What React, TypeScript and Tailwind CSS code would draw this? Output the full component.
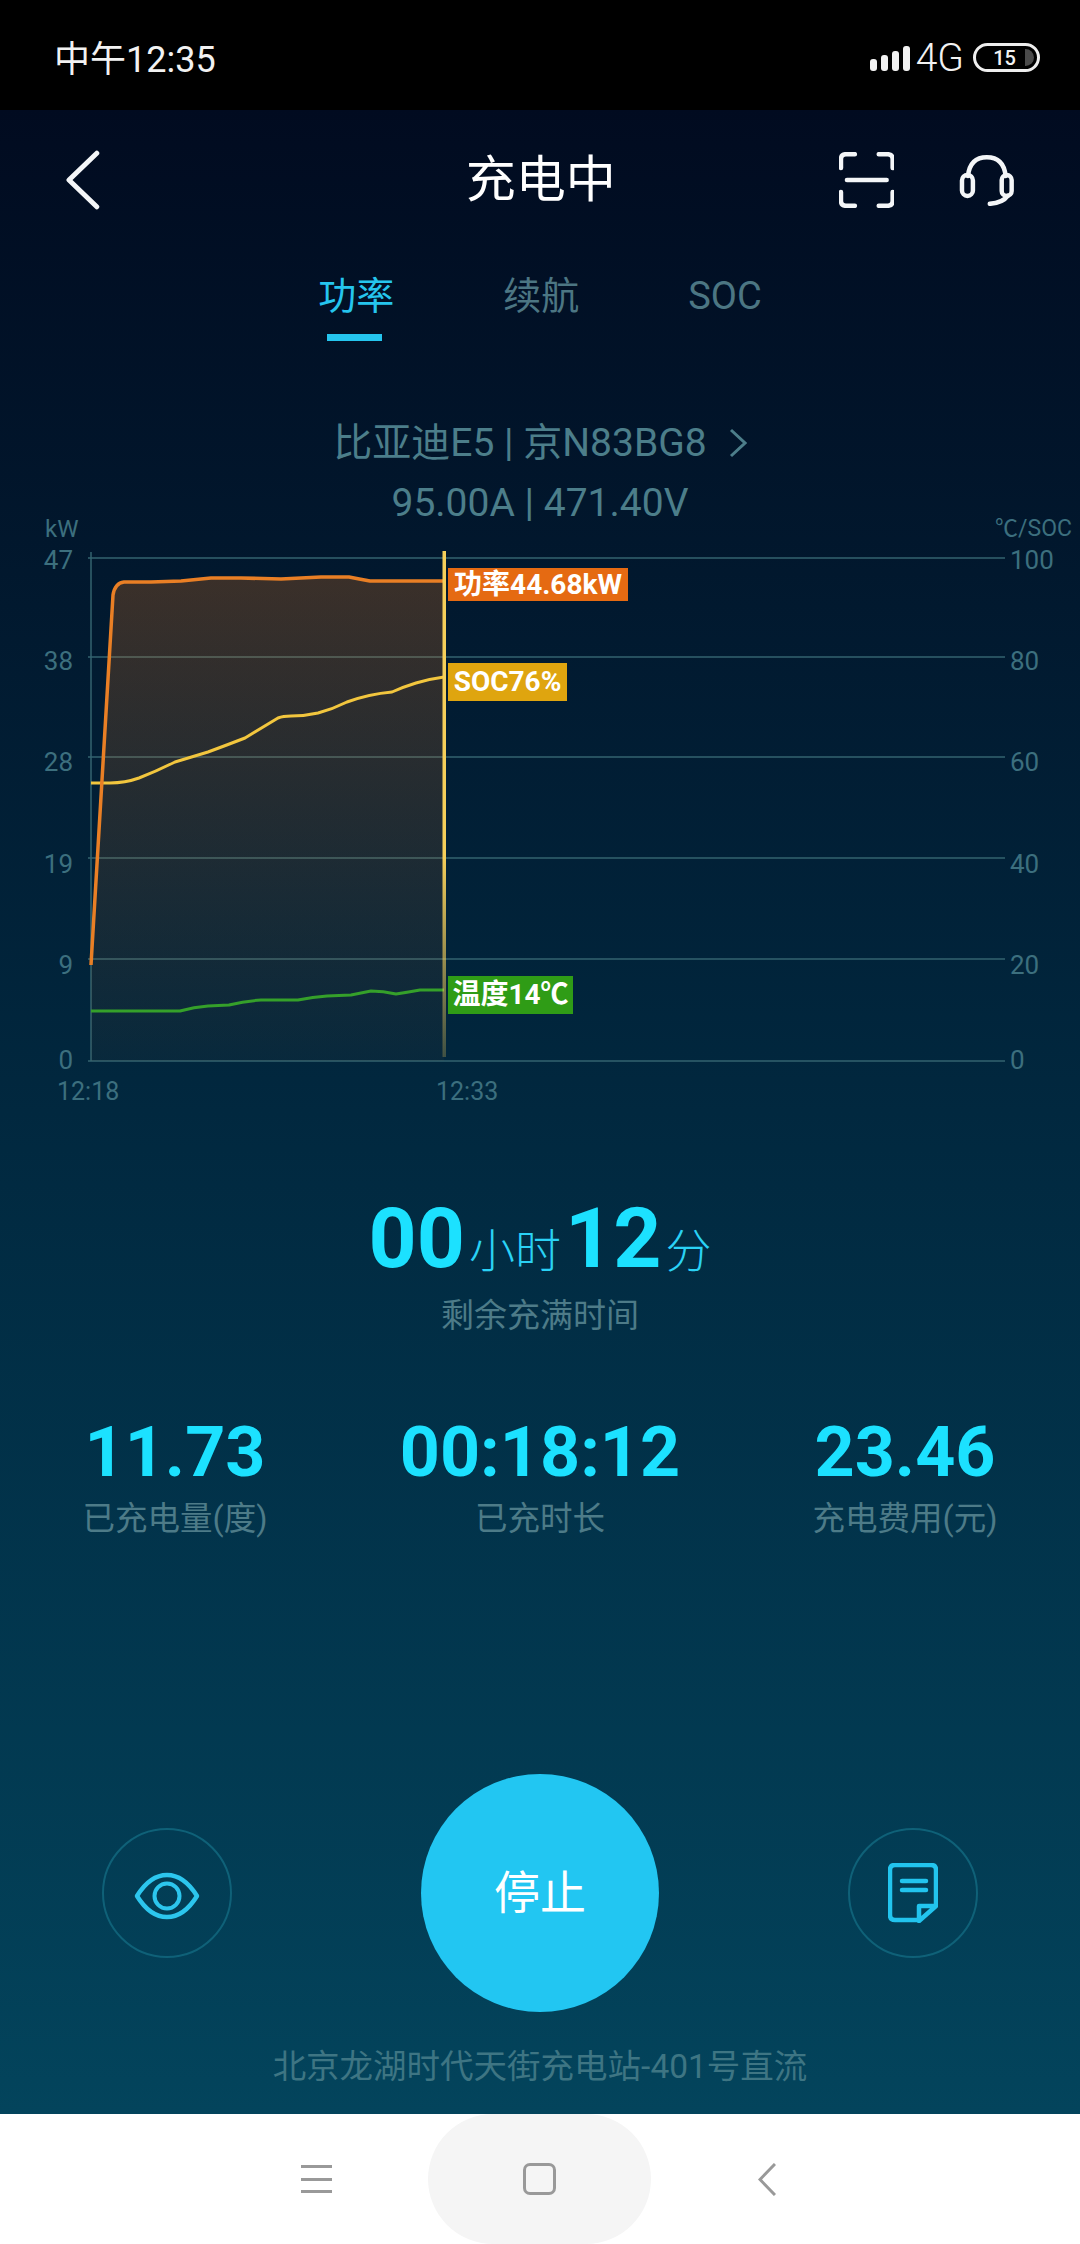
// 充电中 screen
const leftTicks = ["47", "38", "28", "19", "9", "0"];
const rightTicks = ["100", "80", "60", "40", "20", "0"];
const gridY = [7, 106, 206, 307, 408, 510];

// chart paths, origin is the plot's top left corner
const powerLine =
  "M0 414 L22 44 Q24 32 33 31 L60 31 L90 30 L120 27 L150 27 L190 28 L230 26 L258 26 Q268 28 279 30 L353 30";
const socLine =
  "M0 232 L19 232 Q34 232 48 227 Q66 220 84 211 L117 201 Q136 194 154 187 L187 167 Q192 165 200 165 Q214 165 227 162 Q242 158 256 151 Q278 143 301 141 Q312 136 325 132 Q338 128 353 126";
const tempLine =
  "M0 460 L89 460 Q103 456 117 455 L138 454 Q154 450 170 449 L207 449 Q222 446 236 445 L260 444 L280 440 Q292 440 305 443 Q318 441 329 439 L353 439";

function StatusBar() {
  return (
    <div className="h-[110px] shrink-0 bg-black flex items-start justify-between pl-[54px] pr-[40px] text-[#f2f2f2]">
      <span className="mt-[37px] text-[36px] leading-[46px]">中午12:35</span>
      <div className="mt-[43px] flex items-start">
        <div className="flex items-end gap-[4px] h-[26px] mt-[2px]">
          <span className="w-[7px] h-[12px] rounded-[3px] bg-[#f2f2f2]" />
          <span className="w-[7px] h-[16px] rounded-[3px] bg-[#f2f2f2]" />
          <span className="w-[7px] h-[20px] rounded-[3px] bg-[#f2f2f2]" />
          <span className="w-[7px] h-[25px] rounded-[3px] bg-[#f2f2f2]" />
        </div>
        <span className="ml-[6px] text-[39px] leading-[30px] font-light">4G</span>
        <div className="ml-[9px] w-[67px] h-[29px] rounded-full border-[3px] border-[#eeeeee] flex items-center justify-center relative">
          <span className="text-[20px] leading-[22px] font-medium mr-[4px]">15</span>
          <span className="absolute right-[3px] top-[3px] w-[9px] h-[17px] rounded-r-full bg-[#4a4a4a]" />
        </div>
      </div>
    </div>
  );
}

function Header() {
  return (
    <div className="h-[140px] flex items-center pl-[64px] pr-[65px] text-white">
      <svg width="38" height="60" viewBox="0 0 38 60" fill="none" stroke="#f4f6f8" strokeWidth="5" strokeLinecap="round" strokeLinejoin="round">
        <path d="M33 3 L5 30 L33 57" />
      </svg>
      <span className="ml-[364px] w-[150px] text-[50px] leading-[60px] text-center whitespace-nowrap">充电中</span>
      <svg className="ml-[223px]" width="56" height="56" viewBox="0 0 56 56" fill="none" stroke="#f4f6f8" strokeWidth="4.5" strokeLinecap="round">
        <path d="M16 2 H7 Q2 2 2 7 V16" />
        <path d="M40 2 H49 Q54 2 54 7 V16" />
        <path d="M2 40 V49 Q2 54 7 54 H16" />
        <path d="M54 40 V49 Q54 54 49 54 H40" />
        <path d="M8 28 H48" />
      </svg>
      <svg className="ml-[65px]" width="56" height="52" viewBox="0 0 56 52" fill="none" stroke="#f4f6f8" strokeWidth="4.5" strokeLinecap="round" strokeLinejoin="round">
        <path d="M9 22 Q11 3 28 3 Q45 3 47 22" />
        <rect x="3" y="21" width="11" height="21" rx="5.5" />
        <rect x="43" y="21" width="10" height="21" rx="5" />
        <path d="M49 42 Q44 49 31 50" />
      </svg>
    </div>
  );
}

function Tabs() {
  return (
    <div className="flex justify-center gap-[109px] text-[38px] leading-[44px]">
      <div className="flex flex-col items-center">
        <span className="text-[#25c5ee]">功率</span>
        <span className="mt-[16px] mr-[3px] w-[55px] h-[7px] bg-[#25c5ee]" />
      </div>
      <span className="text-[#4c7683]">续航</span>
      <span className="text-[#4c7683]">SOC</span>
    </div>
  );
}

function Chart() {
  return (
    <div>
      <div className="flex justify-between pl-[45px] pr-[8px] text-[#3c6f7e]">
        <span className="text-[24px] leading-[24px]">kW</span>
        <span className="text-[23px] leading-[24px]">℃/SOC</span>
      </div>
      <div className="mt-[10px] flex h-[515px] items-start">
        <div className="w-[91px] h-[536px] -mt-[6px] flex flex-col justify-between items-end pr-[18px] text-[26px] leading-[30px] text-[#3c6f7e]">
          {leftTicks.map((t) => (
            <span key={t} className="last:-translate-y-[6px]">{t}</span>
          ))}
        </div>
        <div className="relative w-[914px] h-[515px]">
          <svg className="w-full h-full overflow-visible" viewBox="0 0 914 515" fill="none">
            <defs>
              <linearGradient id="fill" x1="0" y1="0" x2="0" y2="1">
                <stop offset="0" stopColor="#f07a1a" stopOpacity="0.24" />
                <stop offset="1" stopColor="#f07a1a" stopOpacity="0.03" />
              </linearGradient>
              <linearGradient id="cursor" x1="0" y1="0" x2="0" y2="1">
                <stop offset="0" stopColor="#f5cf5a" />
                <stop offset="0.6" stopColor="#f5cf5a" />
                <stop offset="1" stopColor="#f5cf5a" stopOpacity="0.25" />
              </linearGradient>
            </defs>
            {gridY.map((y) => (
              <line key={y} x1="-3" x2="914" y1={y} y2={y} stroke="#33636f" strokeWidth="1.5" />
            ))}
            <line x1="0" x2="0" y1="1" y2="510" stroke="#33636f" strokeWidth="1.5" />
            <path d={`${powerLine} L353 510 L0 510 Z`} fill="url(#fill)" />
            <path d={tempLine} stroke="#35a02a" strokeWidth="3" strokeLinejoin="round" />
            <path d={socLine} stroke="#f2c63e" strokeWidth="3" strokeLinejoin="round" />
            <path d={powerLine} stroke="#e97f25" strokeWidth="3.5" strokeLinejoin="round" />
            <rect x="351.5" y="0" width="3.5" height="506" fill="url(#cursor)" />
          </svg>
          <span className="absolute left-[357px] top-[17px] h-[33px] w-[180px] bg-[#e56a12] text-white text-[28px] leading-[33px] font-bold text-center whitespace-nowrap">
            功率44.68kW
          </span>
          <span className="absolute left-[357px] top-[112px] h-[38px] w-[119px] bg-[#dfa50f] text-white text-[28px] leading-[38px] font-bold text-center whitespace-nowrap">
            SOC76%
          </span>
          <span className="absolute left-[357px] top-[425px] h-[38px] w-[125px] bg-[#2f9c16] text-white text-[28px] leading-[38px] font-bold text-center whitespace-nowrap">
            温度14℃
          </span>
        </div>
        <div className="pl-[5px] h-[536px] -mt-[6px] flex flex-col justify-between text-[26px] leading-[30px] text-[#3c6f7e]">
          {rightTicks.map((t) => (
            <span key={t} className="last:-translate-y-[6px]">{t}</span>
          ))}
        </div>
      </div>
      <div className="mt-[11px] flex pl-[57px] text-[25px] leading-[30px] text-[#3c6f7e]">
        <span className="w-[379px]">12:18</span>
        <span>12:33</span>
      </div>
    </div>
  );
}

function Stat({ value, label }: { value: string; label: string }) {
  return (
    <div className="w-[350px] flex flex-col items-center">
      <span className="text-[70px] leading-[80px] font-bold text-[#1ce1ff]">{value}</span>
      <span className="mt-[7px] text-[32.5px] leading-[40px] text-[#4d7b88]">{label}</span>
    </div>
  );
}

function Actions() {
  return (
    <div className="mt-[235px] h-[238px] flex items-center pl-[102px] gap-[189px]">
      <div className="w-[130px] h-[130px] rounded-full border-2 border-[#0f6178] flex items-center justify-center">
        <svg className="mt-[5px]" width="66" height="48" viewBox="0 0 66 48" fill="none" stroke="#2cc6ee" strokeWidth="4.5" strokeLinejoin="round">
          <path d="M3 24 Q16 3 33 3 Q50 3 63 24 Q50 45 33 45 Q16 45 3 24 Z" />
          <circle cx="33" cy="24" r="12.5" strokeWidth="4" />
        </svg>
      </div>
      <div className="w-[238px] h-[238px] rounded-full bg-[#22c6f2] flex items-center justify-center text-white text-[46px] leading-[56px]">
        停止
      </div>
      <div className="w-[130px] h-[130px] rounded-full border-2 border-[#0f6178] flex items-center justify-center">
        <svg width="50" height="60" viewBox="0 0 50 60" fill="none" stroke="#22c4ee" strokeWidth="4.5" strokeLinejoin="round" strokeLinecap="round">
          <path d="M30 57 H7 Q2 57 2 52 V7 Q2 2 7 2 H43 Q48 2 48 7 V42" />
          <path d="M14 18 H38" />
          <path d="M14 27 H38" />
          <path d="M31 43 H48 L31 58 Z" />
        </svg>
      </div>
    </div>
  );
}

function NavBar() {
  return (
    <div className="h-[130px] shrink-0 bg-white flex items-center pl-[301px]">
      <div className="w-[31px] h-[28px] flex flex-col justify-between">
        <span className="h-[3px] bg-[#999999]" />
        <span className="h-[3px] bg-[#999999]" />
        <span className="h-[3px] bg-[#999999]" />
      </div>
      <div className="ml-[96px] w-[223px] h-[130px] rounded-full bg-[#f5f5f5] flex items-center justify-center">
        <span className="w-[33px] h-[32px] rounded-[7px] border-[3px] border-[#999999]" />
      </div>
      <svg className="ml-[107px]" width="18" height="33" viewBox="0 0 18 33" fill="none" stroke="#999999" strokeWidth="3">
        <path d="M17 1 L2 16.5 L17 32" />
      </svg>
    </div>
  );
}

export default function App() {
  return (
    <div className="w-[1080px] h-[2244px] overflow-hidden flex flex-col font-['Roboto','Noto_Sans_CJK_SC',sans-serif]">
      <StatusBar />
      <div className="flex-1 bg-gradient-to-b from-[#010b20] via-[#01283f] to-[#03445c]">
        <Header />
        <div className="mt-[24px]">
          <Tabs />
        </div>
        <div className="mt-[77px] flex items-center justify-center text-[39px] leading-[50px] text-[#4c7e8a]">
          <span>比亚迪E5 | 京N83BG8</span>
          <svg className="ml-[22px]" width="18" height="30" viewBox="0 0 18 30" fill="none" stroke="#4c7e8a" strokeWidth="3">
            <path d="M2 2 L16 15 L2 28" />
          </svg>
        </div>
        <div className="mt-[21px] text-center text-[39px] leading-[28px] text-[#4c7e8a]">95.00A | 471.40V</div>
        <Chart />
        <div className="mt-[87px] flex items-baseline justify-center leading-[90px]">
          <span className="text-[84px] font-bold text-[#1ce1ff]">00</span>
          <span className="text-[46px] mx-[4px] font-light text-[#2ad2f5]">小时</span>
          <span className="text-[84px] font-bold text-[#1ce1ff]">12</span>
          <span className="text-[46px] ml-[4px] font-light text-[#2ad2f5]">分</span>
        </div>
        <div className="text-center text-[33px] leading-[40px] text-[#4d7b88]">剩余充满时间</div>
        <div className="mt-[76px] flex gap-[15px]">
          <Stat value="11.73" label="已充电量(度)" />
          <Stat value="00:18:12" label="已充时长" />
          <Stat value="23.46" label="充电费用(元)" />
        </div>
        <Actions />
        <div className="mt-[33px] text-center text-[33.5px] leading-[44px] text-[#3e7583]">北京龙湖时代天街充电站-401号直流</div>
      </div>
      <NavBar />
    </div>
  );
}
